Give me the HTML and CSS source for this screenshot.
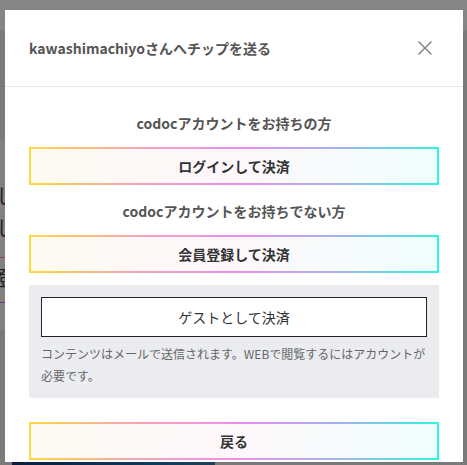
FILE: index.html
```html
<!DOCTYPE html>
<html lang="ja">
<head>
<meta charset="utf-8">
<link rel="stylesheet" href="styles.css">
</head>
<body>
<div class="page">
  <div class="page-top"></div>
  <div class="page-mid">
    <span class="frag frag1">し</span>
    <span class="frag frag2">し</span>
    <span class="line line1"></span>
    <span class="frag frag3">登</span>
    <span class="line line2"></span>
  </div>
  <div class="page-img"></div>
</div>
<div class="modal">
  <div class="modal-header">
    <h2 class="modal-title">kawashimachiyoさんへチップを送る</h2>
    <button class="close" aria-label="閉じる">
      <svg width="16" height="16" viewBox="0 0 16 16"><path d="M1.5 1.5L14.5 14.5M14.5 1.5L1.5 14.5" stroke="#8a8a8a" stroke-width="1.6" fill="none"/></svg>
    </button>
  </div>
  <div class="modal-body">
    <p class="label">codocアカウントをお持ちの方</p>
    <button class="grad-btn">ログインして決済</button>
    <p class="label label2">codocアカウントをお持ちでない方</p>
    <button class="grad-btn">会員登録して決済</button>
    <div class="guest">
      <button class="guest-btn">ゲストとして決済</button>
      <p class="note">コンテンツはメールで送信されます。WEBで閲覧するにはアカウントが必要です。</p>
    </div>
    <button class="grad-btn back">戻る</button>
  </div>
</div>
</body>
</html>
```

FILE: styles.css
```css
* { box-sizing: border-box; }
html, body { margin: 0; padding: 0; }
body {
  width: 467px;
  height: 465px;
  overflow: hidden;
  background: #7a7a7a;
  font-family: "Noto Sans CJK JP", "Noto Sans", sans-serif;
  position: relative;
}
.page { position: absolute; inset: 0; }
.page-top { height: 30px; background: #858585; }
.page-mid { position: absolute; left: 0; top: 140px; width: 8px; height: 190px; background: #857f7e; overflow: hidden; }
.frag { position: absolute; left: -4px; font-size: 20px; line-height: 20px; color: #222; }
.frag1 { top: 46px; }
.frag2 { top: 78px; }
.frag3 { top: 128px; }
.line { position: absolute; left: 0; width: 8px; height: 1px; }
.line1 { top: 117px; background: #8a4070; }
.line2 { top: 162px; background: #6a3b7a; }
.page-img { position: absolute; left: 12px; top: 458px; width: 203px; height: 10px; background: linear-gradient(90deg, #0b1d3c, #123a5a 70%, #1f3f55); }

.modal {
  position: absolute;
  left: 5px;
  top: 10px;
  width: 458px;
  height: 452px;
  background: #fff;
  overflow: hidden;
}
.modal-header {
  height: 77px;
  border-bottom: 1px solid #e6e6e6;
  display: flex;
  align-items: center;
  justify-content: space-between;
  padding: 0 30px 0 24px;
}
.modal-title {
  margin: 0;
  font-size: 14px;
  font-weight: 700;
  color: #555;
  line-height: 20px;
}
.close {
  border: 0;
  background: none;
  padding: 0;
  width: 16px;
  height: 16px;
  display: flex;
}
.modal-body {
  padding: 26px 24px 0;
  display: flex;
  flex-direction: column;
}
.label {
  margin: 0 0 14px;
  text-align: center;
  font-size: 14px;
  font-weight: 700;
  color: #555;
  line-height: 20px;
}
.label2 { margin-top: 16px; }
.grad-btn {
  height: 38px;
  width: 100%;
  border: 2px solid transparent;
  background:
    linear-gradient(100deg, #fffaf1 0%, #fdf7fb 50%, #f0fffd 100%) padding-box,
    linear-gradient(90deg, #ffd93a 0%, #f7a6b0 25%, #f28cf0 50%, #a8b2f2 75%, #2cf6e0 100%) border-box;
  font-family: inherit;
  font-size: 14px;
  font-weight: 700;
  color: #333;
  padding: 0;
}
.guest {
  margin-top: 12px;
  background: #ebecf0;
  padding: 12px 12px 11px;
}
.guest-btn {
  width: 100%;
  height: 40px;
  background: #fff;
  border: 1px solid #222;
  font-family: inherit;
  font-size: 14px;
  color: #333;
  padding: 0;
}
.note {
  margin: 6px 0 0;
  font-size: 12px;
  line-height: 22px;
  color: #666;
}
.back { margin-top: 24px; }
```
